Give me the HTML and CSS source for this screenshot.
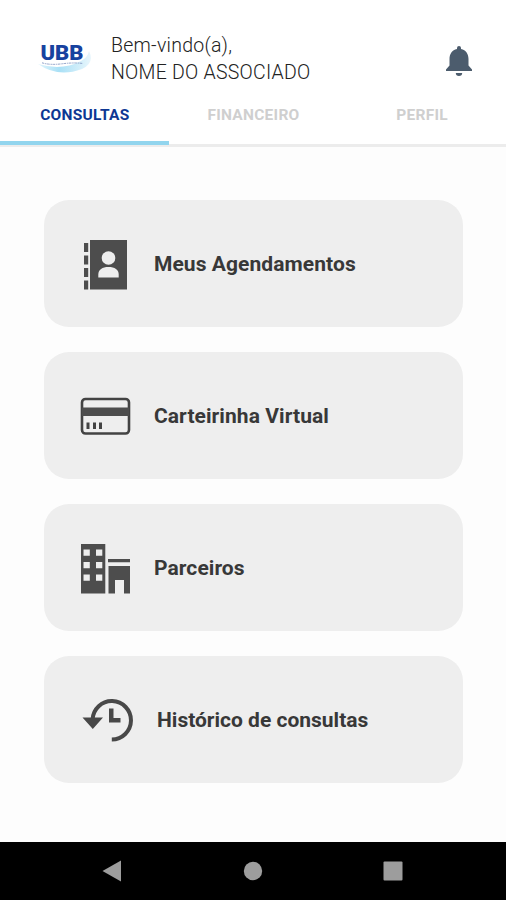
FILE: index.html
```html
<!DOCTYPE html>
<html lang="pt-BR">
<head>
<meta charset="utf-8">
<meta name="viewport" content="width=device-width, initial-scale=1">
<title>UBB</title>
<link rel="stylesheet" href="styles.css">
</head>
<body>
<div class="app">
  <header class="header">
    <svg class="logo" viewBox="0 0 56 36" role="img" aria-label="UBB">
      <defs>
        <linearGradient id="wave" x1="0" x2="1" y1="0" y2="0">
          <stop offset="0" stop-color="#e3f5fc"/>
          <stop offset=".4" stop-color="#a9e0f6"/>
          <stop offset="1" stop-color="#e8f6fc"/>
        </linearGradient>
      </defs>
      <path d="M0 22Q24 29 43 19Q50 15 51 9Q57 21 44 27Q20 36 0 22Z" fill="url(#wave)"/>
      <text class="logo-name" x="2.500" y="17.500" textLength="43" lengthAdjust="spacingAndGlyphs">UBB</text>
      <path d="M4 20.800q8 2.500 20 1t21-.3" fill="none" stroke="#93a5cb" stroke-width="1" stroke-dasharray="2.500 .8 1.500 .6"/>
    </svg>
    <div class="welcome">
      <div class="greeting">Bem-vindo(a),</div>
      <div class="name">NOME DO ASSOCIADO</div>
    </div>
    <svg class="bell" viewBox="0 0 28 32">
      <path d="M14 1a2 2 0 0 0-2 2v1C7 5 4.500 9 4.500 14v6.500L1 24.500V26h26v-1.500L23.500 20.500V14C23.500 9 21 5 16 4V3a2 2 0 0 0-2-2zM10.800 28h6.400a3.200 3 0 0 1-6.400 0z" fill="#4c5c6d"/>
    </svg>
  </header>
  <nav class="tabs">
    <div class="tab active">CONSULTAS</div>
    <div class="tab">FINANCEIRO</div>
    <div class="tab">PERFIL</div>
  </nav>
  <main class="menu">
    <div class="card">
      <svg class="icon" viewBox="80 237 54 54">
        <path d="M90 240h37v49.500H90zM84 243h4.200v9H84zM84 255.500h4.200v9H84zM84 268h4.200v9H84zM84 280.500h4.200v9H84z" fill="#4d4d4d"/>
        <circle cx="108.500" cy="258" r="6.800" fill="#eee"/>
        <path d="M98.300 277.500v-3c0-5 4-7.500 10.200-7.500s10.200 2.500 10.200 7.500v3z" fill="#eee"/>
      </svg>
      <span class="label">Meus Agendamentos</span>
    </div>
    <div class="card">
      <svg class="icon" viewBox="80 389.500 54 54">
        <rect x="82" y="399.500" width="47" height="34.500" rx="3.500" fill="none" stroke="#434343" stroke-width="2.600"/>
        <path d="M82 408h47v8.500H82z" fill="#4d4d4d"/>
        <path d="M86.500 423h3v6.500h-3zM93 423h3v6.500h-3zM99 423h3v6.500h-3z" fill="#434343"/>
      </svg>
      <span class="label">Carteirinha Virtual</span>
    </div>
    <div class="card">
      <svg class="icon" viewBox="80 541 54 54">
        <path d="M81 544h24.300v49.500H81zM108 559h22v3.200h-22zM108.500 566H130v27.500h-6V580h-9v13.500h-6.500z" fill="#4d4d4d"/>
        <path d="M83.500 549.500h6.300v6.300h-6.300zM96 549.500h6.300v6.300H96zM83.500 562h6.300v6.300h-6.300zM96 562h6.300v6.300H96zM83.500 574.500h6.300v6.300h-6.300zM96 574.500h6.300v6.300H96z" fill="#eee"/>
      </svg>
      <span class="label">Parceiros</span>
    </div>
    <div class="card">
      <svg class="icon" viewBox="80 693.500 54 54">
        <path d="M92.600 720A19.200 19.200 0 1 1 111.800 740" fill="none" stroke="#484848" stroke-width="4"/>
        <path d="M82.500 718h20.500l-10.200 11.500zM109 709h4.500v9.500h7v4.500H109z" fill="#484848"/>
      </svg>
      <span class="label history">Histórico de consultas</span>
    </div>
  </main>
  <footer class="system-bar">
    <svg viewBox="0 0 20 22"><path d="M.5 11L19 .500v21z"/></svg>
    <svg viewBox="0 0 20 22"><circle cx="10" cy="11" r="9.200"/></svg>
    <svg viewBox="0 0 20 22"><rect x=".5" y="1.500" width="19" height="19" rx="1"/></svg>
  </footer>
</div>
</body>
</html>
```
FILE: styles.css
```css
* { box-sizing: border-box; }
body {
  margin: 0;
  font-family: Roboto, "Liberation Sans", sans-serif;
  background: #fdfdfd;
}
.app {
  display: flex;
  flex-direction: column;
  height: 900px;
}
.header {
  display: flex;
  height: 92px;
  padding: 0 33px 0 38px;
  background: #fff;
}
.logo {
  width: 56px;
  height: 36px;
  margin-top: 42px;
}
.logo-name {
  font: 900 20px Roboto, sans-serif;
  fill: #17429f;
}
.welcome {
  flex: 1;
  margin: 32px 0 0 17px;
  font-size: 19.500px;
  font-weight: 300;
  line-height: 27px;
  letter-spacing: .25px;
  color: #222;
  white-space: nowrap;
}
.bell {
  width: 28px;
  height: 32px;
  margin-top: 45px;
}
.tabs {
  display: grid;
  grid-template-columns: repeat(3, 1fr);
  height: 55px;
  background: #fff;
  border-bottom: 3px solid #ececec;
}
.tab {
  display: flex;
  justify-content: center;
  height: 53px;
  padding: 13px 0 0 1px;
  font-size: 15.500px;
  line-height: 20px;
  font-weight: 700;
  letter-spacing: .27px;
  color: #cfcfcf;
}
.tab.active {
  color: #0d3793;
  border-bottom: 4px solid #92d5ee;
}
.menu {
  flex: 1;
  display: flex;
  flex-direction: column;
  gap: 25px;
  padding: 53px 43px 0 44px;
}
.card {
  display: flex;
  align-items: center;
  height: 127px;
  padding-left: 36px;
  border-radius: 25px;
  background: #eee;
}
.icon {
  width: 54px;
  height: 54px;
}
.label {
  margin-left: 20px;
  padding-top: 1px;
  font-size: 21px;
  line-height: 24px;
  font-weight: 700;
  letter-spacing: .07px;
  color: #383838;
  white-space: nowrap;
}
.history {
  margin-left: 23px;
  letter-spacing: 0;
}
.system-bar {
  display: flex;
  justify-content: space-between;
  align-items: center;
  height: 58px;
  padding: 0 103px 0 102px;
  background: #000;
}
.system-bar svg {
  width: 20px;
  height: 22px;
  fill: #9d9d9d;
}
```
